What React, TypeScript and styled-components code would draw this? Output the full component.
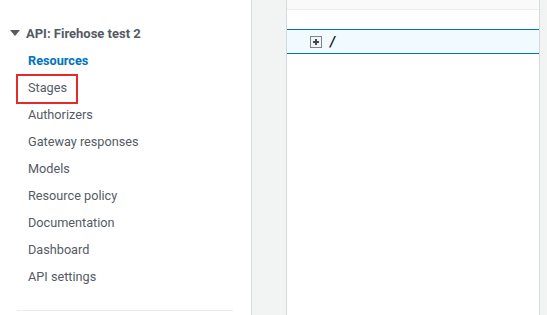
import React from 'react';
import styled, { createGlobalStyle } from 'styled-components';

const GlobalStyle = createGlobalStyle`
    html, body {
        margin: 0;
        padding: 0;
        background: #ffffff;
    }
    body {
        font-family: Roboto, "Liberation Sans", Arial, sans-serif;
    }
`;

const Page = styled.div`
    display: flex;
    width: 547px;
    height: 315px;
    overflow: hidden;
`;

const Sidebar = styled.nav`
    width: 251px;
    flex-shrink: 0;
    border-right: 1px solid #d5dbdb;
    background: #ffffff;
    padding: 24px 0 0 0;
    box-sizing: content-box;
    display: flex;
    flex-direction: column;
`;

const GroupTitle = styled.div`
    display: flex;
    align-items: center;
    gap: 6px;
    padding-left: 10px;
    height: 18px;
    font-size: 13px;
    font-weight: 700;
    color: #545b64;
`;

const Caret = styled.span`
    width: 0;
    height: 0;
    border-left: 5px solid transparent;
    border-right: 5px solid transparent;
    border-top: 6px solid #545b64;
`;

const NavList = styled.ul`
    list-style: none;
    margin: 5px 0 0 0;
    padding: 0 0 0 28px;
`;

const NavItem = styled.li<{ $active?: boolean; $marked?: boolean }>`
    position: relative;
    height: 27px;
    line-height: 27px;
    font-size: 12.7px;
    font-weight: ${(p) => (p.$active ? 700 : 400)};
    color: ${(p) => (p.$active ? '#0073bb' : '#545b64')};
    white-space: nowrap;

    ${(p) =>
        p.$marked &&
        `
        &::after {
            content: '';
            position: absolute;
            left: -12px;
            top: 0;
            width: 58px;
            height: 26px;
            border: 2px solid #e52a2a;
        }
    `}
`;

const Divider = styled.hr`
    margin: 20px 0 0 17px;
    width: 216px;
    border: none;
    border-top: 1px solid #eaeded;
`;

const Main = styled.main`
    flex: 1;
    display: flex;
    background: #f2f3f3;
    padding: 0 7px 0 34px;
`;

const Panel = styled.section`
    flex: 1;
    display: flex;
    flex-direction: column;
    background: #ffffff;
    border-left: 1px solid #d5dbdb;
    border-right: 1px solid #d5dbdb;
`;

const PanelHeader = styled.div`
    height: 9px;
    background: #fafafa;
    border-bottom: 1px solid #eaeded;
`;

const Tree = styled.div`
    margin-top: 19px;
`;

const TreeRow = styled.div<{ $selected?: boolean }>`
    display: flex;
    align-items: center;
    gap: 8px;
    height: 23px;
    padding-left: 23px;
    background: ${(p) => (p.$selected ? '#f1faff' : 'transparent')};
    border-top: 1px solid ${(p) => (p.$selected ? '#0073bb' : 'transparent')};
    border-bottom: 1px solid ${(p) => (p.$selected ? '#0073bb' : 'transparent')};
`;

const ExpandBox = styled.span`
    position: relative;
    width: 10px;
    height: 10px;
    border: 1.5px solid #7d868c;
    background: #f2f3f3;
    display: inline-block;

    &::before,
    &::after {
        content: '';
        position: absolute;
        background: #414750;
    }
    &::before {
        left: 2px;
        top: 4px;
        width: 6px;
        height: 2px;
    }
    &::after {
        left: 4px;
        top: 2px;
        width: 2px;
        height: 6px;
    }
`;

const PathLabel = styled.span`
    font-size: 14px;
    font-weight: 700;
    font-style: italic;
    color: #16191f;
`;

const navItems = [
    'Resources',
    'Stages',
    'Authorizers',
    'Gateway responses',
    'Models',
    'Resource policy',
    'Documentation',
    'Dashboard',
    'API settings',
];

export default function App() {
    return (
        <Page>
            <GlobalStyle />
            <Sidebar>
                <GroupTitle>
                    <Caret />
                    API: Firehose test 2
                </GroupTitle>
                <NavList>
                    {navItems.map((item) => (
                        <NavItem key={item} $active={item === 'Resources'} $marked={item === 'Stages'}>
                            {item}
                        </NavItem>
                    ))}
                </NavList>
                <Divider />
            </Sidebar>
            <Main>
                <Panel>
                    <PanelHeader />
                    <Tree>
                        <TreeRow $selected>
                            <ExpandBox />
                            <PathLabel>/</PathLabel>
                        </TreeRow>
                    </Tree>
                </Panel>
            </Main>
        </Page>
    );
}
